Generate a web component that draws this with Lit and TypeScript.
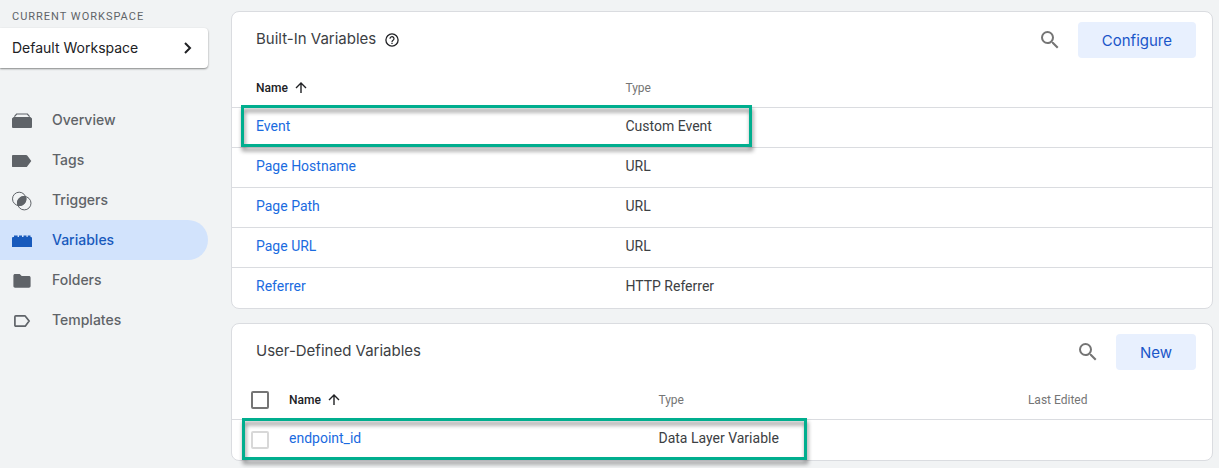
import { LitElement, html, css, svg, nothing } from "lit";
import { customElement, property } from "lit/decorators.js";
import { classMap } from "lit/directives/class-map.js";

const icons = {
  overview: svg`<path d="M2.400 6.600 4.600 4h10.800l2.200 2.600" fill="none" stroke="currentColor" stroke-width="1.2"/><path d="M0 8.400 1.600 7h16.800L20 8.400V17a1 1 0 0 1-1 1H1a1 1 0 0 1-1-1z" fill="currentColor"/>`,
  tags: svg`<path d="M0 6A.9.9 0 0 1 .9 5.100h13.200a1.400 1.400 0 0 1 1.100.5L19.300 11.100l-4.100 5.400a1.400 1.400 0 0 1-1.100.6H.9a.9.9 0 0 1-.9-.9z" fill="currentColor"/>`,
  triggers: svg`<circle cx="7.2" cy="8.9" r="6.700" fill="none" stroke="currentColor" stroke-width="1"/><circle cx="12.3" cy="13.2" r="6.700" fill="none" stroke="currentColor" stroke-width="1"/><path d="M5.500 15.700A7 7 0 0 1 13.900 6.300 7 7 0 0 1 5.500 15.700z" fill="currentColor"/>`,
  variables: svg`<path d="M0 7.900a1 1 0 0 1 1-1h1V5.600h3.600v1.300h1.400V5.600h3v1.300h1.500V5.600h3v1.300h1.200V5.600h2.800v1.300h.5a1 1 0 0 1 1 1V17H0z" fill="currentColor"/>`,
  folders: svg`<path d="M1.400 5.700c0-1 .7-1.700 1.700-1.700h4.600l2 2h7.200c1 0 1.700.7 1.700 1.700v8.400c0 1-.7 1.700-1.700 1.700H3.100c-1 0-1.700-.7-1.700-1.700z" fill="currentColor"/>`,
  templates: svg`<path d="M3.800 5.900h8.800c.4 0 .8.2 1 .5l3.500 4.700-3.500 4.600c-.2.3-.6.5-1 .5H3.800c-.5 0-.9-.4-.9-.9V6.800c0-.5.4-.9.9-.9z" fill="none" stroke="currentColor" stroke-width="1.700"/>`,
};

type IconName = keyof typeof icons;

const navItems: { label: string; icon: IconName }[] = [
  { label: "Overview", icon: "overview" },
  { label: "Tags", icon: "tags" },
  { label: "Triggers", icon: "triggers" },
  { label: "Variables", icon: "variables" },
  { label: "Folders", icon: "folders" },
  { label: "Templates", icon: "templates" },
];

interface Variable {
  name: string;
  type: string;
}

const builtIn: Variable[] = [
  { name: "Event", type: "Custom Event" },
  { name: "Page Hostname", type: "URL" },
  { name: "Page Path", type: "URL" },
  { name: "Page URL", type: "URL" },
  { name: "Referrer", type: "HTTP Referrer" },
];

const userDefined: Variable[] = [{ name: "endpoint_id", type: "Data Layer Variable" }];

@customElement("side-nav")
export class SideNav extends LitElement {
  @property() selected = "Variables";

  static styles = css`
    :host {
      display: block;
      font-family: "Inter", "Roboto", sans-serif;
    }
    .label {
      padding: 9px 12px 3px;
      font: 11px/16px "Roboto", sans-serif;
      letter-spacing: 1px;
      text-transform: uppercase;
      color: #5f6368;
    }
    .workspace {
      display: flex;
      align-items: center;
      justify-content: space-between;
      width: 100%;
      height: 40px;
      padding: 0 12px;
      border: 0;
      border-radius: 0 4px 4px 0;
      background: #fff;
      box-shadow: 0 1px 2px rgba(0, 0, 0, 0.45);
      font: 14px/20px "Inter", sans-serif;
      color: #202124;
    }
    .chevron {
      width: 16px;
      height: 16px;
    }
    .list {
      margin: 32px 0 0;
      padding: 0;
      list-style: none;
    }
    .item {
      display: flex;
      align-items: center;
      gap: 20px;
      height: 40px;
      padding-left: 12px;
      border-radius: 0 20px 20px 0;
      font-size: 14px;
      font-weight: 500;
      line-height: 20px;
      color: #5f6368;
      text-decoration: none;
    }
    .selected {
      background: #d2e3fc;
      color: #185abc;
    }
    .icon {
      width: 20px;
      height: 20px;
      overflow: visible;
    }
  `;

  render() {
    return html`
      <div class="label" id="ws">Current workspace</div>
      <button class="workspace" aria-describedby="ws">
        Default Workspace
        <svg class="chevron" viewBox="0 0 16 16" fill="none" stroke="currentColor" stroke-width="2">
          <path d="M5 3l5 5-5 5" />
        </svg>
      </button>
      <nav>
        <ul class="list">
          ${navItems.map(
            (item) => html`<li>
              <a class=${classMap({ item: true, selected: item.label === this.selected })} href="#${item.icon}">
                <svg class="icon" viewBox="0 0 20 20" aria-hidden="true">${icons[item.icon]}</svg>
                ${item.label}
              </a>
            </li>`
          )}
        </ul>
      </nav>
    `;
  }
}

@customElement("variable-card")
export class VariableCard extends LitElement {
  @property() heading = "";
  @property() action = "";
  @property({ type: Boolean }) help = false;
  @property({ type: Boolean, reflect: true }) selectable = false;
  @property({ attribute: false }) rows: Variable[] = [];

  static styles = css`
    :host {
      display: block;
      position: relative;
      border: 1px solid #dadce0;
      border-radius: 8px;
      background: #fff;
      font-family: "Roboto", sans-serif;
    }
    .header {
      display: flex;
      align-items: center;
      height: 56px;
      padding: 0 16px 0 24px;
    }
    .title {
      margin: 0;
      padding-bottom: 2px;
      font: 400 15px/24px "Inter", sans-serif;
      color: #3c4043;
    }
    .help {
      width: 16px;
      height: 16px;
      margin-left: 8px;
      color: #202124;
    }
    .search {
      width: 24px;
      height: 24px;
      margin: 0 16px 0 auto;
      padding: 0;
      border: 0;
      background: none;
      color: #757575;
    }
    .search svg {
      display: block;
    }
    .action {
      height: 36px;
      padding: 2px 24px 0;
      border: 0;
      border-radius: 4px;
      background: #e8f0fe;
      font: 400 15px/20px "Inter", sans-serif;
      color: #1a56c9;
    }
    .table {
      width: 100%;
      border-collapse: separate;
      border-spacing: 0;
      table-layout: fixed;
    }
    .check-col {
      width: 41px;
    }
    .data-col {
      width: 37.7%;
    }
    th,
    td {
      box-sizing: border-box;
      height: 40px;
      padding: 0 0 0 24px;
      border-bottom: 1px solid #dadce0;
      text-align: left;
      vertical-align: middle;
      line-height: 20px;
    }
    :host([selectable]) th,
    :host([selectable]) td {
      padding-left: 16px;
    }
    :host([selectable]) .check {
      padding: 0 0 0 19px;
    }
    th {
      font-size: 12px;
      font-weight: 400;
      color: #757575;
    }
    td {
      padding-bottom: 4px;
      font-size: 14px;
      color: #3c4043;
    }
    tbody tr:last-child td {
      border-bottom: 0;
    }
    .sorted {
      font-weight: 500;
      color: #202124;
    }
    .sort {
      display: inline-flex;
      align-items: center;
      gap: 6px;
    }
    .link {
      color: #1a6be0;
      text-decoration: none;
    }
    .box {
      display: block;
      appearance: none;
      width: 18px;
      height: 18px;
      margin: 0;
      border: 2px solid #757575;
      border-radius: 2px;
      background: #fff;
    }
    .box:disabled {
      border-color: #d8d8d8;
    }
    .highlight {
      position: absolute;
      box-sizing: border-box;
      top: 93px;
      left: 9px;
      width: 511px;
      height: 42px;
      border: 3px solid #00ae8e;
      filter: drop-shadow(1px 4px 2px rgba(0, 0, 0, 0.45));
      pointer-events: none;
    }
    :host([selectable]) .highlight {
      top: 94px;
      left: 10px;
      width: 565px;
    }
  `;

  render() {
    return html`
      <div class="header">
        <h2 class="title">${this.heading}</h2>
        ${this.help
          ? html`<svg class="help" viewBox="0 0 16 16" role="img" aria-label="Help" fill="none" stroke="currentColor">
              <circle cx="8" cy="8" r="6.1" stroke-width="1.3" />
              <path d="M6 6.7a2 2 0 1 1 3.1 1.6C8.4 8.800 8 9.100 8 9.900" stroke-width="1.2" />
              <path d="M8 10.700v1.300" stroke-width="1.300" />
            </svg>`
          : nothing}
        <button class="search" aria-label="Search">
          <svg viewBox="0 0 24 24" width="24" height="24" fill="currentColor">
            <path
              d="M15.5 14h-.79l-.28-.27A6.471 6.471 0 0 0 16 9.500 6.500 6.500 0 1 0 9.500 16c1.610 0 3.090-.590 4.230-1.570l.270.280v.790l5 4.990L20.490 19l-4.990-5zm-6 0C7.010 14 5 11.990 5 9.500S7.010 5 9.500 5 14 7.010 14 9.500 11.990 14 9.500 14z"
            />
          </svg>
        </button>
        <button class="action">${this.action}</button>
      </div>
      <table class="table">
        <colgroup>
          ${this.selectable ? html`<col class="check-col" />` : nothing}
          <col class="data-col" />
          ${this.selectable ? html`<col class="data-col" />` : nothing}
          <col />
        </colgroup>
        <thead>
          <tr>
            ${this.selectable
              ? html`<th class="check"><input class="box" type="checkbox" aria-label="Select all" /></th>`
              : nothing}
            <th class="sorted" aria-sort="ascending">
              <span class="sort">
                Name
                <svg width="14" height="14" viewBox="0 0 14 14" fill="none" stroke="currentColor" stroke-width="1.4">
                  <path d="M7 12V2M2 7l5-5 5 5" />
                </svg>
              </span>
            </th>
            <th>Type</th>
            ${this.selectable ? html`<th>Last Edited</th>` : nothing}
          </tr>
        </thead>
        <tbody>
          ${this.rows.map(
            (row) => html`<tr>
              ${this.selectable
                ? html`<td class="check">
                    <input class="box" type="checkbox" disabled aria-label="Select ${row.name}" />
                  </td>`
                : nothing}
              <td><a class="link" href="#${row.name}">${row.name}</a></td>
              <td>${row.type}</td>
              ${this.selectable ? html`<td></td>` : nothing}
            </tr>`
          )}
        </tbody>
      </table>
      <div class="highlight"></div>
    `;
  }
}

@customElement("app-root")
export class AppRoot extends LitElement {
  static styles = css`
    :host {
      display: grid;
      grid-template-columns: 208px minmax(0, 1fr);
      column-gap: 23px;
      box-sizing: border-box;
      min-height: 100vh;
      padding-right: 6px;
      background: #f1f3f4;
    }
    .content {
      display: flex;
      flex-direction: column;
      gap: 14px;
      padding: 11px 0 7px;
    }
  `;

  render() {
    return html`
      <side-nav></side-nav>
      <main class="content">
        <variable-card heading="Built-In Variables" action="Configure" help .rows=${builtIn}></variable-card>
        <variable-card heading="User-Defined Variables" action="New" selectable .rows=${userDefined}></variable-card>
      </main>
    `;
  }
}
